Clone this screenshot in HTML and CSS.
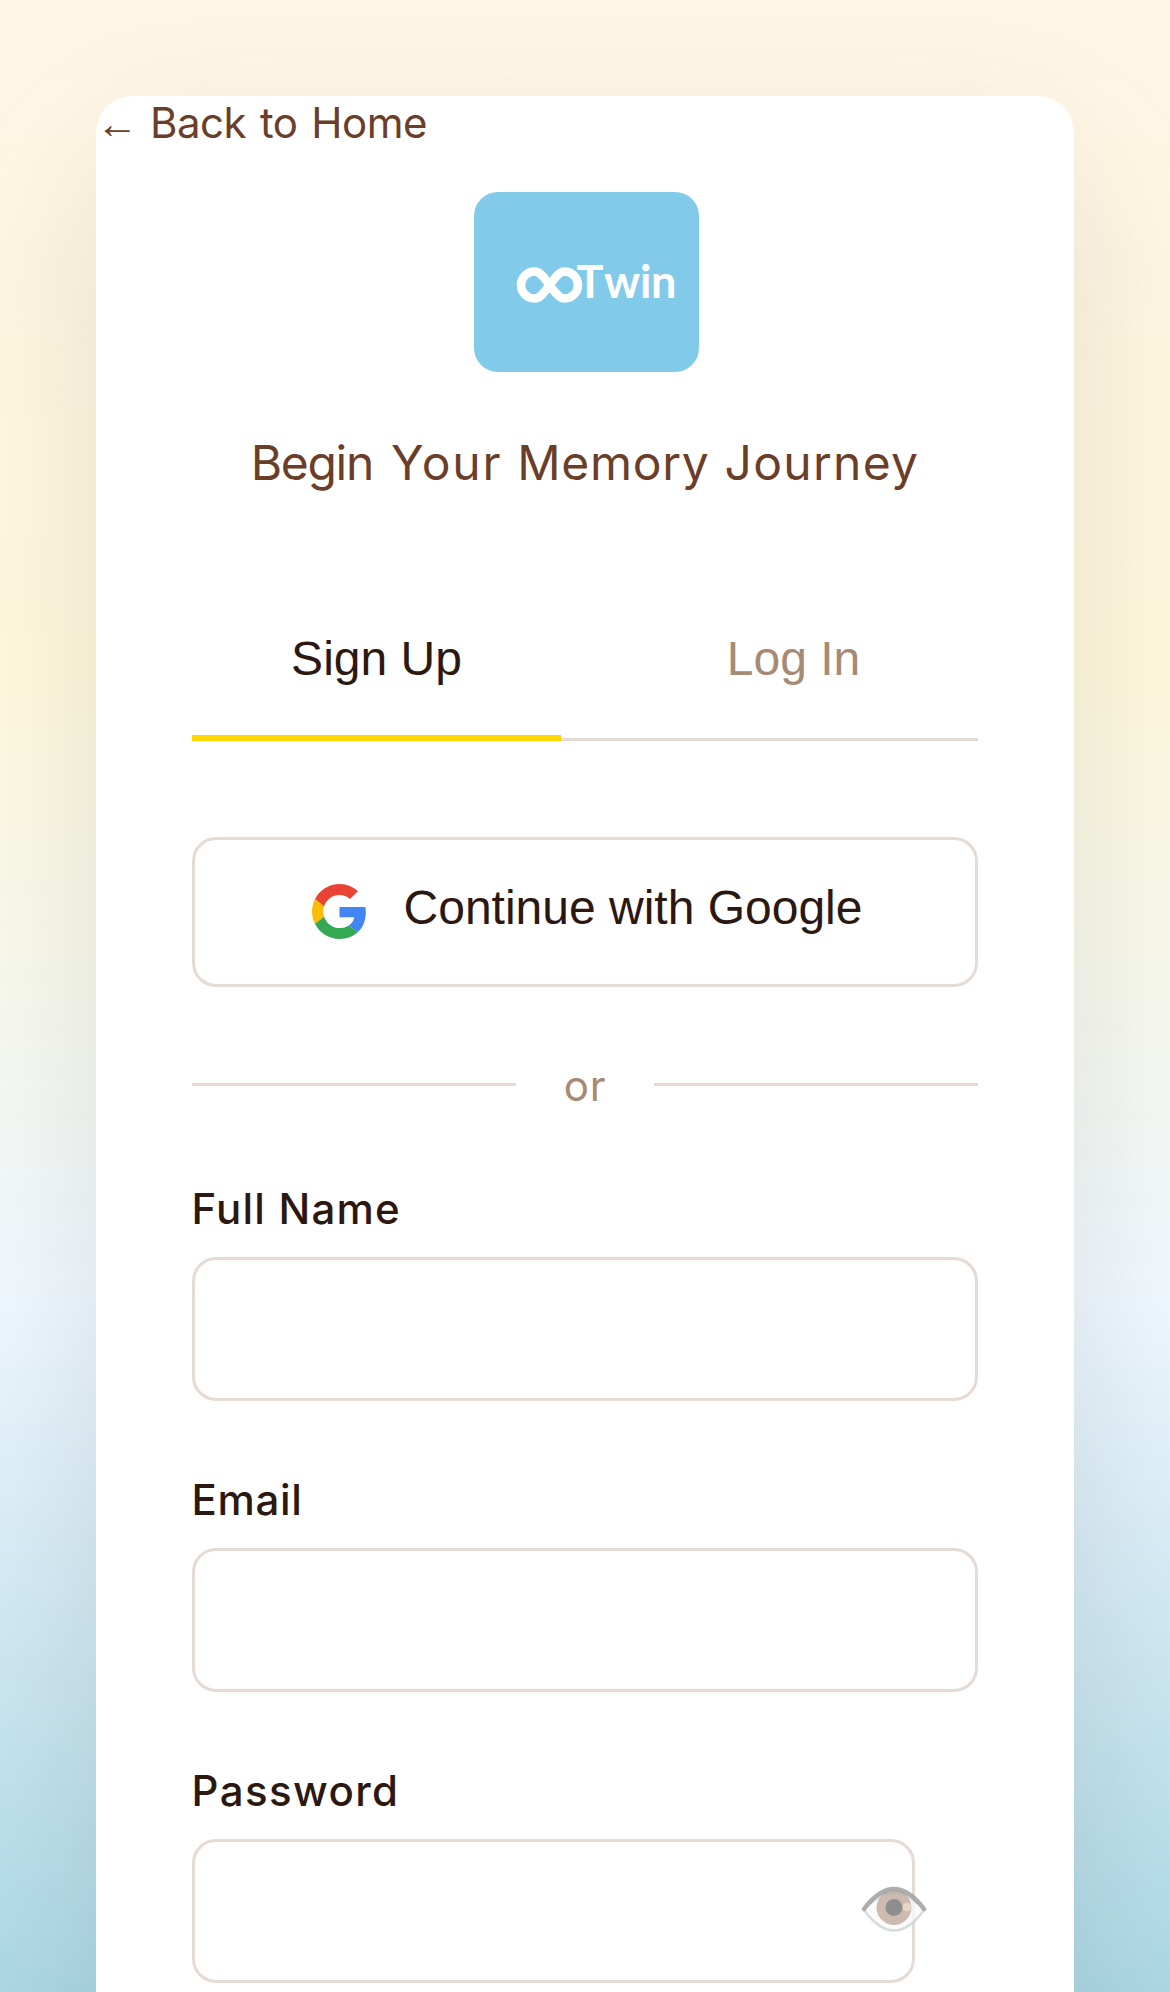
FILE: index.html
```html
<!DOCTYPE html>
<html lang="en">
<head>
<meta charset="utf-8">
<title>OOTwin – Sign Up</title>
<link rel="stylesheet" href="styles.css">
</head>
<body>
<main class="card">
  <a class="back" href="#"><span class="arrow">←</span> Back to Home</a>
  <svg class="logo" viewBox="0 0 225 180" role="img" aria-label="Twin">
    <rect width="225" height="180" rx="24" fill="#82caea"/>
    <path class="loop" d="M75.500 93 C70 86 67 79.500 60.500 79.500 A13.500 13.500 0 0 0 60.500 106.500 C67 106.500 70 100 75.500 93 C81 86 85 79.500 90.500 79.500 A13.500 13.500 0 0 1 90.500 106.500 C85 106.500 81 100 75.500 93Z"/>
    <text class="logo-text" x="102.500 130 166 177" y="106">Twin</text>
  </svg>
  <h1 class="title"><span class="w1">Begin</span> <span class="w2">Your</span> <span class="w3">Memory</span> <span class="w4">Journey</span></h1>
  <div class="tabs">
    <button class="tab tab-active">Sign Up</button>
    <button class="tab tab-login">Log In</button>
  </div>
  <button class="google">
    <svg class="g-icon" viewBox="0 0 48 48">
      <path fill="#EA4335" d="M24 9.5c3.54 0 6.71 1.22 9.21 3.6l6.85-6.85C35.9 2.38 30.47 0 24 0 14.62 0 6.51 5.38 2.56 13.22l7.98 6.19C12.43 13.72 17.74 9.5 24 9.5z"/>
      <path fill="#4285F4" d="M46.98 24.55c0-1.57-.15-3.09-.38-4.55H24v9.02h12.94c-.58 2.96-2.26 5.48-4.78 7.18l7.73 6c4.51-4.18 7.09-10.36 7.09-17.65z"/>
      <path fill="#FBBC05" d="M10.53 28.59c-.48-1.45-.76-2.99-.76-4.59s.27-3.14.76-4.59l-7.98-6.19C.92 16.46 0 20.12 0 24c0 3.88.92 7.54 2.56 10.78l7.97-6.19z"/>
      <path fill="#34A853" d="M24 48c6.48 0 11.93-2.13 15.89-5.81l-7.73-6c-2.15 1.45-4.92 2.3-8.16 2.3-6.26 0-11.57-4.22-13.47-9.91l-7.98 6.19C6.51 42.62 14.62 48 24 48z"/>
    </svg>
    <span>Continue with Google</span>
  </button>
  <div class="divider"><span>or</span></div>
  <form class="form">
    <label class="field"><span class="label name-label">Full Name</span><input class="input" type="text"></label>
    <label class="field"><span class="label email-label">Email</span><input class="input" type="email"></label>
    <label class="field password"><span class="label password-label">Password</span><input class="input input-password" type="password">
      <svg class="eye" viewBox="0 0 66 48">
        <path d="M3 25Q33-15 63 25Q33 66 3 25Z" fill="#fafafa" fill-opacity=".75"/>
        <circle cx="33" cy="22.500" r="17.500" fill="#cebbb0"/>
        <path d="M3 25Q33 66 63 25" fill="none" stroke="#c9d3d7" stroke-opacity=".8" stroke-width="2.500"/>
        <path d="M9 19Q33-4 57 19" fill="none" stroke="#a6b0b2" stroke-opacity=".35" stroke-width="3"/>
        <circle cx="33" cy="22.500" r="8.500" fill="#8e8e8e"/>
        <circle cx="46" cy="22" r="4.300" fill="#e8d5c9"/>
        <path d="M3 24Q33-16 63 24" fill="none" stroke="#9a9a9a" stroke-opacity=".8" stroke-width="4.500" stroke-linecap="round"/>
      </svg>
    </label>
  </form>
</main>
</body>
</html>
```
FILE: styles.css
```css
* { box-sizing: border-box; }
html { height: 100%; overflow: hidden; }
body {
  margin: 0;
  height: 1992px;
  padding: 96px 96px 0;
  overflow: hidden;
  font-family: Inter, "Liberation Sans", sans-serif;
  color: #2c1810;
  background: linear-gradient(180deg, #fff5e6 0%, #fff8dc 33.3%, #f0f8ff 65%, #add8e6 100%);
}
.card {
  height: 2400px;
  padding: 0 96px;
  background: #fff;
  border-radius: 36px;
  box-shadow: 0 60px 160px rgba(0, 0, 0, .1);
}
.back {
  display: flex;
  align-items: baseline;
  height: 54px;
  margin-left: -96px;
  gap: 12px;
  font-size: 42px;
  line-height: 54px;
  letter-spacing: -.5px;
  word-spacing: 2.5px;
  white-space: nowrap;
  color: #6b3e2a;
  text-decoration: none;
}
.arrow { width: 42px; font-family: "Liberation Sans", sans-serif; font-size: 42px; line-height: 40px; }
.logo { display: block; width: 225px; height: 180px; margin: 42px auto 0; position: relative; left: 1px; }
.loop { fill: none; stroke: #fff; stroke-width: 8.5; }
.logo-text { font: 700 45px Lato, sans-serif; fill: #fff; }
.title {
  margin: 61px 0 0;
  height: 60px;
  font-size: 48px;
  line-height: 60px;
  font-weight: 400;
  letter-spacing: 1.5px;
  text-align: center;
  white-space: nowrap;
  color: #6b3e2a;
}
.w1 { margin-right: 3px; letter-spacing: -1.3px; }
.w2 { letter-spacing: 1.8px; }
.w3 { letter-spacing: .7px; }
.w4 { letter-spacing: 1.3px; }
.tabs { display: flex; height: 148px; margin-top: 100px; border-bottom: 3px solid #e5dbd4; }
.tab {
  flex: 1 1 0;
  height: 148px;
  padding: 0 0 10px;
  border: 0;
  background: none;
  font: 48px/58px "Liberation Sans", sans-serif;
  color: #a68a74;
}
.tab-active { flex: 0 0 369px; border-bottom: 6px solid #ffd700; color: #2c1810; }
.tab-login { padding: 0 0 16px 48px; }
.google {
  display: flex;
  align-items: center;
  justify-content: center;
  gap: 37px;
  width: 786px;
  height: 150px;
  margin-top: 96px;
  padding: 0 0 0 4px;
  border: 3px solid #e5dbd4;
  border-radius: 24px;
  background: #fff;
  font: 48px/54px "Liberation Sans", sans-serif;
  color: #2c1810;
}
.google span { padding-bottom: 8px; }
.g-icon { width: 55px; height: 55px; margin-bottom: 1px; }
.divider {
  display: flex;
  align-items: center;
  gap: 48px;
  height: 50px;
  margin-top: 72px;
  font-size: 42px;
  line-height: 50px;
  letter-spacing: .8px;
  color: #a68a74;
}
.divider span { padding-top: 3px; margin-bottom: -1px; }
.divider::before, .divider::after { content: ""; flex: 1; height: 3px; background: #e5dbd4; }
.form { display: flex; flex-direction: column; gap: 74px; margin-top: 75px; }
.field { display: flex; flex-direction: column; height: 217px; position: relative; }
.label { height: 50px; margin: 0 0 23px -.5px; font-size: 42px; line-height: 50px; font-weight: 500; white-space: nowrap; }
.name-label { letter-spacing: 1.2px; }
.email-label { letter-spacing: .7px; }
.password-label { letter-spacing: 1.4px; }
.input { width: 786px; height: 144px; padding: 0 48px; border: 3px solid #e5dbd4; border-radius: 24px; background: #fff; }
.input-password { width: 723px; }
.eye { position: absolute; left: 669px; top: 119px; width: 66px; height: 48px; }
```
